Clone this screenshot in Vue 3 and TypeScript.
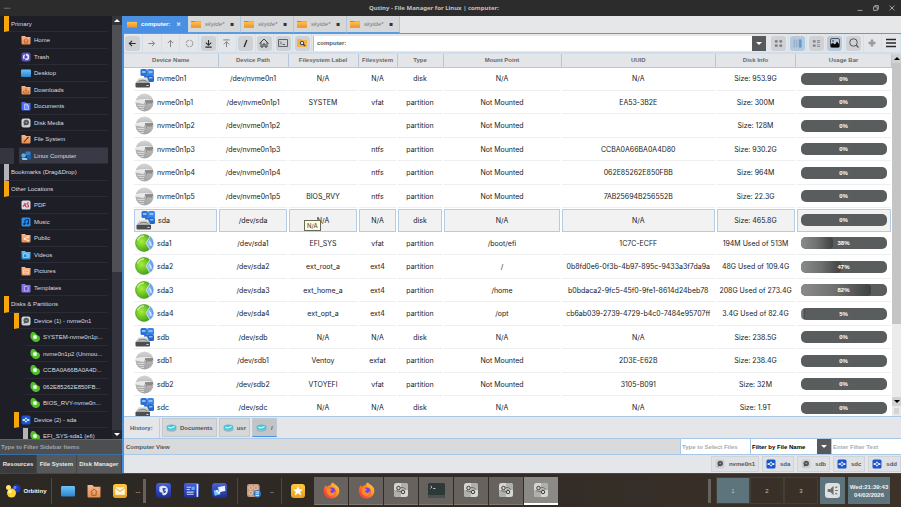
<script setup lang="ts">
import { ref } from 'vue'

interface SideItem {
  label: string
  level: 0 | 1 | 2 | 3
  icon?: string
  mark?: 'orange' | 'grey'
  selected?: boolean
}

interface Device {
  name: string
  kind: 'disk' | 'raw' | 'pie'
  label: string
  fs: string
  mount: string
  uuid: string
  info: string
  used: number
  selected?: boolean
}

const sideItems: SideItem[] = [
  { label: 'Primary', level: 0, mark: 'orange' },
  { label: 'Home', level: 1, icon: 'f-home' },
  { label: 'Trash', level: 1, icon: 'trash' },
  { label: 'Desktop', level: 1, icon: 'desktop' },
  { label: 'Downloads', level: 1, icon: 'f-down' },
  { label: 'Documents', level: 1, icon: 'f-doc' },
  { label: 'Disk Media', level: 1, icon: 'media' },
  { label: 'File System', level: 1, icon: 'f-root' },
  { label: 'Linux Computer', level: 1, icon: 'computer', selected: true },
  { label: 'Bookmarks (Drag&Drop)', level: 0, mark: 'grey' },
  { label: 'Other Locations', level: 0, mark: 'orange' },
  { label: 'PDF', level: 1, icon: 'pdf' },
  { label: 'Music', level: 1, icon: 'music' },
  { label: 'Public', level: 1, icon: 'f-share' },
  { label: 'Videos', level: 1, icon: 'f-video' },
  { label: 'Pictures', level: 1, icon: 'f-pic' },
  { label: 'Templates', level: 1, icon: 'f-tmpl' },
  { label: 'Disks & Partitions', level: 0, mark: 'orange' },
  { label: 'Device (1) - nvme0n1', level: 2, icon: 'media', mark: 'orange' },
  { label: 'SYSTEM-nvme0n1p...', level: 3, icon: 'part' },
  { label: 'nvme0n1p2 (Unmou...', level: 3, icon: 'part' },
  { label: 'CCBA0A66BA0A4D...', level: 3, icon: 'part' },
  { label: '062E85262E850FB...', level: 3, icon: 'part' },
  { label: 'BIOS_RVY-nvme0n...', level: 3, icon: 'part' },
  { label: 'Device (2) - sda', level: 2, icon: 'usb', mark: 'orange' },
  { label: 'EFI_SYS-sda1 (efi)', level: 3, icon: 'part', mark: 'grey' },
]

const NM = 'Not Mounted'
const NA = 'N/A'
const devices: Device[] = [
  { name: 'nvme0n1', kind: 'disk', label: NA, fs: NA, mount: NA, uuid: NA, info: 'Size: 953.9G', used: 0 },
  { name: 'nvme0n1p1', kind: 'raw', label: 'SYSTEM', fs: 'vfat', mount: NM, uuid: 'EA53-3B2E', info: 'Size: 300M', used: 0 },
  { name: 'nvme0n1p2', kind: 'raw', label: '', fs: '', mount: NM, uuid: '', info: 'Size: 128M', used: 0 },
  { name: 'nvme0n1p3', kind: 'raw', label: '', fs: 'ntfs', mount: NM, uuid: 'CCBA0A66BA0A4D80', info: 'Size: 930.2G', used: 0 },
  { name: 'nvme0n1p4', kind: 'raw', label: '', fs: 'ntfs', mount: NM, uuid: '062E85262E850FBB', info: 'Size: 964M', used: 0 },
  { name: 'nvme0n1p5', kind: 'raw', label: 'BIOS_RVY', fs: 'ntfs', mount: NM, uuid: '7AB25694B256552B', info: 'Size: 22.3G', used: 0 },
  { name: 'sda', kind: 'disk', label: NA, fs: NA, mount: NA, uuid: NA, info: 'Size: 465.8G', used: 0, selected: true },
  { name: 'sda1', kind: 'pie', label: 'EFI_SYS', fs: 'vfat', mount: '/boot/efi', uuid: '1C7C-ECFF', info: '194M Used of 513M', used: 38 },
  { name: 'sda2', kind: 'pie', label: 'ext_root_a', fs: 'ext4', mount: '/', uuid: '0b8fd0e6-0f3b-4b97-895c-9433a3f7da9a', info: '48G Used of 109.4G', used: 47 },
  { name: 'sda3', kind: 'pie', label: 'ext_home_a', fs: 'ext4', mount: '/home', uuid: 'b0bdaca2-9fc5-45f0-9fe1-8614d24beb78', info: '208G Used of 273.4G', used: 82 },
  { name: 'sda4', kind: 'pie', label: 'ext_opt_a', fs: 'ext4', mount: '/opt', uuid: 'cb6ab039-2739-4729-b4c0-7484e95707ff', info: '3.4G Used of 82.4G', used: 5 },
  { name: 'sdb', kind: 'disk', label: NA, fs: NA, mount: NA, uuid: NA, info: 'Size: 238.5G', used: 0 },
  { name: 'sdb1', kind: 'raw', label: 'Ventoy', fs: 'exfat', mount: NM, uuid: '2D3E-E62B', info: 'Size: 238.4G', used: 0 },
  { name: 'sdb2', kind: 'raw', label: 'VTOYEFI', fs: 'vfat', mount: NM, uuid: '3105-B091', info: 'Size: 32M', used: 0 },
  { name: 'sdc', kind: 'disk', label: NA, fs: NA, mount: NA, uuid: NA, info: 'Size: 1.9T', used: 0 },
]

const columns = ['Device Name', 'Device Path', 'Filesystem Label', 'Filesystem', 'Type', 'Mount Point', 'UUID', 'Disk Info', 'Usage Bar']
const otherTabs = ['skyide*', 'skyide*', 'skyide*', 'skyide*']
const navTools = [
  { icon: 't-back', on: true, name: 'Back' },
  { icon: 't-fwd', on: false, name: 'Forward' },
  { icon: 't-up', on: false, name: 'Up' },
  { icon: 't-reload', on: false, name: 'Reload' },
  { icon: 't-bottom', on: true, name: 'Bottom' },
  { icon: 't-top', on: false, name: 'Top' },
  { icon: 't-slash', on: true, name: 'Root' },
  { icon: 't-home', on: true, name: 'Home' },
  { icon: 't-term', on: true, name: 'Terminal' },
  { icon: 't-find', on: true, name: 'Find in folder' },
]
const viewTools = [
  { icon: 't-grid', on: true, name: 'Icons' },
  { icon: 't-cols', on: true, blue: true, name: 'Columns' },
  { icon: 't-list', on: true, name: 'List' },
  { icon: 't-image', on: true, blue: true, name: 'Thumbnails' },
  { icon: 't-search', on: true, name: 'Search' },
  { icon: 't-plus', on: false, name: 'Add' },
  { icon: 't-menu', on: false, name: 'Menu' },
]
const history = [
  { label: 'Documents', current: false },
  { label: 'usr', current: false },
  { label: '/', current: true },
]
const drives = [
  { label: 'nvme0n1', icon: 'media' },
  { label: 'sda', icon: 'usb' },
  { label: 'sdb', icon: 'media' },
  { label: 'sdc', icon: 'usb' },
  { label: 'sdd', icon: 'usb' },
]
const sideTabs = ['Resources', 'File System', 'Disk Manager']
const windows = ['firefox', 'firefox', 'gears', 'console', 'gears', 'gears', 'gears']

const path = ref('computer:')
const sideFilter = ref('')
const selectText = ref('')
const filterText = ref('')
const filterBy = ref('Filter by File Name')
</script>

<template>
  <div class="screen">
    <svg class="defs" aria-hidden="true">
      <defs>
        <linearGradient id="g-or" x1="0" y1="0" x2="0" y2="1"><stop offset="0" stop-color="#f7b98c" /><stop offset="1" stop-color="#e88d52" /></linearGradient>
        <linearGradient id="g-sky" x1="0" y1="0" x2="0" y2="1"><stop offset="0" stop-color="#6cc4f8" /><stop offset="1" stop-color="#2a84cf" /></linearGradient>
        <linearGradient id="g-navy" x1="0" y1="0" x2="0" y2="1"><stop offset="0" stop-color="#4a63d8" /><stop offset="1" stop-color="#1c2c92" /></linearGradient>
        <linearGradient id="g-silver" x1="0" y1="0" x2="0" y2="1"><stop offset="0" stop-color="#f4f4f4" /><stop offset="1" stop-color="#9a9a9a" /></linearGradient>
        <linearGradient id="g-yel" x1="0" y1="0" x2="0" y2="1"><stop offset="0" stop-color="#ffc93e" /><stop offset="1" stop-color="#e9a01c" /></linearGradient>
        <linearGradient id="g-fold" x1="0" y1="0" x2="0" y2="1"><stop offset="0" stop-color="#ffc050" /><stop offset="1" stop-color="#f0912a" /></linearGradient>
        <radialGradient id="g-green" cx=".35" cy=".4" r=".7"><stop offset="0" stop-color="#a8f03c" /><stop offset="1" stop-color="#3a9c10" /></radialGradient>
        <radialGradient id="g-blue" cx=".4" cy=".5" r=".7"><stop offset="0" stop-color="#a9d2ff" /><stop offset="1" stop-color="#3478cf" /></radialGradient>
        <linearGradient id="g-ball" x1="0" y1="0" x2="0" y2="1"><stop offset="0" stop-color="#d6d6d6" /><stop offset=".45" stop-color="#b9b9b9" /><stop offset="1" stop-color="#a2a2a2" /></linearGradient>
        <linearGradient id="g-fire" x1="1" y1="0" x2="0" y2="1"><stop offset="0" stop-color="#ffe14a" /><stop offset=".45" stop-color="#ff8a1e" /><stop offset="1" stop-color="#f0244f" /></linearGradient>
        <path id="fold" d="M1 2h7l2 2h9v13a2 2 0 0 1-2 2H3a2 2 0 0 1-2-2z" />
      </defs>
      <symbol id="f-home" viewBox="0 0 20 20"><use href="#fold" fill="url(#g-or)" /><path d="M5 11l5-4 5 4M7 10v6h6v-6M10 12v3" fill="none" stroke="#c4602a" stroke-width="1.6" /></symbol>
      <symbol id="f-down" viewBox="0 0 20 20"><use href="#fold" fill="url(#g-or)" /><path d="M10 6v6M7 10l3 3 3-3M5 12v4h10v-4" fill="none" stroke="#b8602c" stroke-width="1.6" /></symbol>
      <symbol id="f-doc" viewBox="0 0 20 20"><use href="#fold" fill="#4d6cf5" /><path d="M7 6h5l3 3v8H7zM12 6v4h3" fill="#6f8bff" stroke="#d4dcff" stroke-width="1.3" /></symbol>
      <symbol id="f-root" viewBox="0 0 20 20"><use href="#fold" fill="url(#g-or)" /><path d="M6 16l8-9M13 6l2 2" stroke="#5b2b14" stroke-width="2.2" /></symbol>
      <symbol id="f-share" viewBox="0 0 20 20"><use href="#fold" fill="url(#g-or)" /><path d="M14 8l-7 3.500 7 3.500" fill="none" stroke="#fff" stroke-width="1.400" /><circle cx="7" cy="11.500" r="1.700" fill="#fff" /><circle cx="14" cy="8" r="1.700" fill="#fff" /><circle cx="14" cy="15" r="1.700" fill="#fff" /></symbol>
      <symbol id="f-video" viewBox="0 0 20 20"><use href="#fold" fill="url(#g-sky)" /><path d="M5 8h7v7H5zM12 11l4-2v6l-4-2" fill="#2d83c4" stroke="#d7f0ff" stroke-width="1.200" /></symbol>
      <symbol id="f-pic" viewBox="0 0 20 20"><use href="#fold" fill="url(#g-or)" /><path d="M5 8h10v8H5zM6 14l3-3 3 3 2-2" fill="none" stroke="#ffe3cf" stroke-width="1.400" /></symbol>
      <symbol id="f-tmpl" viewBox="0 0 20 20"><use href="#fold" fill="#8473e6" /><path d="M7 7h5l2 2v7H7z" fill="#6955c9" stroke="#d8d1ff" stroke-width="1.300" /></symbol>
      <symbol id="trash" viewBox="0 0 20 20"><rect x="1" y="1" width="18" height="18" rx="4" fill="#5753b8" /><circle cx="10" cy="10" r="4.800" fill="none" stroke="#ece9ff" stroke-width="3.200" stroke-dasharray="8 2" /></symbol>
      <symbol id="desktop" viewBox="0 0 20 20"><rect x="0" y="3" width="20" height="15" rx="2" fill="url(#g-sky)" /></symbol>
      <symbol id="media" viewBox="0 0 20 20"><rect x="1" y="1" width="18" height="18" rx="4" fill="#cfd0d2" /><circle cx="10.500" cy="9" r="5.500" fill="#55585c" /><circle cx="10.500" cy="9" r="1.500" fill="#aaa" /><path d="M6 15l3-4" stroke="#3a3c40" stroke-width="2" /></symbol>
      <symbol id="computer" viewBox="0 0 20 20"><rect x="9" y="1" width="10" height="8" rx="1" fill="#2f7fd0" /><rect x="12" y="9" width="8" height="8" rx="1" fill="#1e5fa8" /><circle cx="5" cy="9" r="4.500" fill="#55aee8" /><path d="M1 14h10l2 4H3z" fill="#8fcbee" /></symbol>
      <symbol id="pdf" viewBox="0 0 20 20"><rect x="1" y="1" width="18" height="18" rx="3" fill="#d7dbe6" /><path d="M4 14l4-8 1 8M5 11h5M16 6h-4v4h3v4h-5" fill="none" stroke="#d8304a" stroke-width="1.800" /></symbol>
      <symbol id="music" viewBox="0 0 20 20"><rect x="1" y="1" width="18" height="18" rx="3" fill="#2b8de8" /><path d="M8 14V6l7-1v8" fill="none" stroke="#0c2d5c" stroke-width="2" /><circle cx="6.500" cy="14" r="2.200" fill="#0c2d5c" /><circle cx="13.500" cy="13" r="2.200" fill="#0c2d5c" /></symbol>
      <symbol id="part" viewBox="0 0 20 20"><path d="M3 1c4-2 8 0 9 3l3 3c3-1 5 2 5 6s-4 7-8 7-7-2-8-5C0 13 0 4 3 1z" fill="#4fbf2c" /><circle cx="10" cy="10" r="4.500" fill="#b5ee98" /><circle cx="10" cy="10" r="3" fill="#fff" /></symbol>
      <symbol id="usb" viewBox="0 0 20 20"><rect x="1" y="1" width="18" height="18" rx="3" fill="#1a55cc" /><path d="M4 10h12M10 5v10" stroke="#fff" stroke-width="1.600" /><circle cx="10" cy="10" r="3" fill="#1a55cc" stroke="#fff" stroke-width="1.600" /><circle cx="4.500" cy="10" r="1.700" fill="#fff" /><circle cx="15.500" cy="10" r="1.700" fill="#fff" /></symbol>
      <symbol id="d-disk" viewBox="0 0 38 38"><rect x="11" y="0" width="13" height="14" rx="3" fill="#2a72d8" /><rect x="24" y="0" width="14" height="14" rx="3" fill="#3b86e6" /><rect x="18" y="13" width="20" height="13" rx="3" fill="#2468c8" /><path d="M14 4h7v4h-7zM27 4h8v4h-8zM28 16h7v3h-7z" fill="#8dbdf8" /><path d="M8 17h16l6 12H1z" fill="url(#g-silver)" /><path d="M1 28h29v7a2 2 0 0 1-2 2H3a2 2 0 0 1-2-2z" fill="#4c4f52" /><path d="M8 25a8 4 0 0 1 15 0" fill="none" stroke="#777" stroke-width="2" /><path d="M23 33h4" stroke="#cde" stroke-width="2" /></symbol>
      <symbol id="d-raw" viewBox="0 0 38 38"><circle cx="19" cy="19" r="18" fill="url(#g-ball)" /><path d="M2 14c9-3 25-3 34 0l-1 3H20l-3 5-15-3z" fill="#e9e9e9" /><path d="M20 16h16" stroke="#5c5c5c" stroke-width="2.500" /><path d="M22 17h13l-1 4H24l-2 6z" fill="#8b8b8b" /><path d="M5 25h14M7 29h11M11 33h7" stroke="#d6d6d6" stroke-width="2" /></symbol>
      <symbol id="d-pie" viewBox="0 0 38 38"><ellipse cx="18" cy="18" rx="17" ry="17" fill="url(#g-green)" stroke="#2d7c12" /><path d="M22 18L31 4q6 6 7 14-1 9-8 14z" fill="url(#g-blue)" stroke="#e9f4ff" stroke-width="1.500" /><path d="M5 13q4-9 13-9" fill="none" stroke="#e2ffbd" stroke-width="3" opacity=".7" /><path d="M29 15q4 3 3 9" fill="none" stroke="#fff" stroke-width="2" /></symbol>
      <symbol id="folder" viewBox="0 0 20 14"><path d="M0 1h8l1 1h11v12H0z" fill="#d98118" /><path d="M0 3h20v11H0z" fill="url(#g-fold)" /></symbol>
      <symbol id="t-back" viewBox="0 0 20 20"><path d="M17 10H4M9 4l-6 6 6 6" fill="none" stroke="currentColor" stroke-width="2.600" /></symbol>
      <symbol id="t-fwd" viewBox="0 0 20 20"><path d="M3 10h13M11 4l6 6-6 6" fill="none" stroke="#777" stroke-width="2" /></symbol>
      <symbol id="t-up" viewBox="0 0 20 20"><path d="M10 18V4M4 9l6-6 6 6" fill="none" stroke="#777" stroke-width="2" /></symbol>
      <symbol id="t-reload" viewBox="0 0 20 20"><circle cx="10" cy="10" r="7.500" fill="none" stroke="#8a8d90" stroke-width="1.800" stroke-dasharray="10 2" /></symbol>
      <symbol id="t-bottom" viewBox="0 0 20 20"><path d="M10 2v12M4 8l6 6 6-6M3 18h14" fill="none" stroke="currentColor" stroke-width="2.400" /></symbol>
      <symbol id="t-top" viewBox="0 0 20 20"><path d="M10 18V6M4 12l6-6 6 6M3 2h14" fill="none" stroke="#777" stroke-width="2" /></symbol>
      <symbol id="t-slash" viewBox="0 0 20 20"><path d="M7 18l6-16" stroke="currentColor" stroke-width="3" /></symbol>
      <symbol id="t-home" viewBox="0 0 20 20"><path d="M1 11l9-9 9 9M4 9v9h4v-6h4v6h4V9" fill="none" stroke="currentColor" stroke-width="1.800" /></symbol>
      <symbol id="t-term" viewBox="0 0 20 20"><path d="M1 3h18v14H1zM4 7l3 3-3 3M9 13h5" fill="none" stroke="#55585c" stroke-width="1.800" /></symbol>
      <symbol id="t-find" viewBox="0 0 20 20"><path d="M0 2h8l2 2h10v14H0z" fill="#f2b43c" /><circle cx="10" cy="10" r="3.500" fill="#dbe6ff" stroke="#2b3c8c" stroke-width="2" /><path d="M12 12l4 4" stroke="#2b3c8c" stroke-width="2.600" /></symbol>
      <symbol id="t-grid" viewBox="0 0 20 20"><path d="M2 3h6v5H2zM12 3h6v5h-6zM2 12h6v5H2zM12 12h6v5h-6z" fill="#77797b" /></symbol>
      <symbol id="t-cols" viewBox="0 0 20 20"><path d="M1 1h4v18H1zM7 1h3v18H7z" fill="#8fb4d6" /><path d="M13 1h6v18h-6z" fill="#5f9bd2" /></symbol>
      <symbol id="t-list" viewBox="0 0 20 20"><path d="M2 3h6v5H2zM2 12h6v5H2zM11 3h7v2h-7zM11 7h7v2h-7zM11 12h7v2h-7zM11 16h7v2h-7z" fill="#808284" /></symbol>
      <symbol id="t-image" viewBox="0 0 20 20"><rect x="1" y="1" width="18" height="18" rx="3" fill="none" stroke="#222" stroke-width="1.400" /><path d="M2 18v-6l4-2 4 3 4-6 4 5v6z" fill="#050505" /><circle cx="6" cy="6" r="1.500" fill="#111" /></symbol>
      <symbol id="t-search" viewBox="0 0 20 20"><circle cx="9" cy="9" r="7.500" fill="none" stroke="#55585b" stroke-width="2" /><path d="M14 14l5 5" stroke="#55585b" stroke-width="2.400" /></symbol>
      <symbol id="t-plus" viewBox="0 0 20 20"><path d="M10 3v14M3 10h14" stroke="#999c9f" stroke-width="5" /></symbol>
      <symbol id="t-menu" viewBox="0 0 20 20"><path d="M0 3h20M0 10h20M0 17h20" stroke="#26282a" stroke-width="3" /></symbol>
      <symbol id="h-disk" viewBox="0 0 22 16"><ellipse cx="11" cy="10" rx="10" ry="5.500" fill="#8fb9c4" /><ellipse cx="11" cy="6" rx="10" ry="5" fill="#46c4d8" /><path d="M5 6q4 4 12-1" fill="none" stroke="#e6fbff" stroke-width="2.500" /></symbol>
      <symbol id="a-orbit" viewBox="0 0 32 28"><circle cx="7" cy="7" r="5" fill="#ffe777" /><circle cx="23" cy="9" r="8" fill="#1d38c8" /><circle cx="20" cy="7" r="3" fill="#6a85ff" /><circle cx="13" cy="18" r="9" fill="#ffd42e" /><circle cx="10" cy="15" r="3.500" fill="#fff7c0" /></symbol>
      <symbol id="a-home" viewBox="0 0 26 26"><path d="M1 2h9l3 3h12v18a2 2 0 0 1-2 2H3a2 2 0 0 1-2-2z" fill="url(#g-or)" /><path d="M7 15l6-6 6 6M9 14v7h8v-7" fill="none" stroke="#9c532c" stroke-width="1.600" /></symbol>
      <symbol id="a-mail" viewBox="0 0 26 26"><rect width="26" height="26" rx="5" fill="url(#g-yel)" /><rect x="4" y="6" width="18" height="14" rx="1" fill="#fff4d6" /><path d="M4 7l9 7 9-7" fill="none" stroke="#d79a28" stroke-width="1.600" /></symbol>
      <symbol id="a-eagle" viewBox="0 0 28 28"><rect width="28" height="28" rx="6" fill="url(#g-navy)" /><path d="M6 8c4-4 14-4 16 3 1 6-2 11-7 12-3 0-4-3-3-5-4 0-6-2-6-4 0-3 1-4 0-6z" fill="#dfe6f5" /><path d="M12 10q5-2 7 1-3 0-4 3 3 0 4 2-2 3-5 3 1-3-1-4z" fill="#32459f" /></symbol>
      <symbol id="a-writer" viewBox="0 0 28 28"><rect width="28" height="28" rx="4" fill="url(#g-navy)" /><path d="M25 2v24" stroke="#dfe6ff" stroke-width="3" /><path d="M5 8h8M5 12h6M5 17h13M5 21h13" stroke="#c5d7ff" stroke-width="2" /><path d="M14 7h6v6h-6z" fill="#58b3f5" /></symbol>
      <symbol id="a-share" viewBox="0 0 28 28"><rect width="28" height="28" rx="6" fill="url(#g-navy)" /><path d="M11 8l13-3 1 10-11 2z" fill="#e8f1ff" /><path d="M3 14l10-2 3 9-11 3z" fill="#78c2f8" /><path d="M8 14l5 5 6-8" fill="none" stroke="#fff" stroke-width="2" /></symbol>
      <symbol id="a-db" viewBox="0 0 30 30"><rect width="27" height="28" rx="5" fill="#c4997f" /><g fill="none" stroke="#e6c7b2" stroke-width="2"><circle cx="8" cy="8" r="4" /><circle cx="19" cy="8" r="4" /><circle cx="8" cy="19" r="4" /></g><circle cx="22" cy="21" r="8" fill="#2476c4" /><path d="M18 17h8M18 21h8M18 25h8" stroke="#cbe6ff" stroke-width="2.400" /></symbol>
      <symbol id="a-star" viewBox="0 0 28 28"><rect width="28" height="28" rx="6" fill="url(#g-yel)" /><path d="M14 4l3 7h7l-5.500 4.500 2 7.500-6.500-4.500L7.500 23l2-7.500L4 11h7z" fill="#fff" /></symbol>
      <symbol id="firefox" viewBox="0 0 34 34"><path d="M20 1c2 4 8 5 11 10 5 11-2 22-14 22S0 24 2 13c1-3 2-5 4-7l1 4c3-3 5-3 8-3 0-2 2-5 5-6z" fill="url(#g-fire)" /><circle cx="17" cy="19" r="8" fill="#7a3fe0" /><path d="M8 13c4-2 8 0 10 3-4 0-4 3-2 5 3 2 7 0 7-4 3 6-1 11-7 11S6 20 8 13z" fill="#ff8a24" /></symbol>
      <symbol id="gears" viewBox="0 0 28 28"><rect width="28" height="28" rx="5" fill="#d6d6d3" /><path d="M14 0h9a5 5 0 0 1 5 5v9H14zM0 14h14v14H5a5 5 0 0 1-5-5z" fill="#b0b0ac" /><circle cx="9" cy="10" r="3.500" fill="none" stroke="#3a3a38" stroke-width="2" /><circle cx="18" cy="18" r="3.500" fill="none" stroke="#3a3a38" stroke-width="2" /><path d="M4 15q6 4 10 2M13 9q6-2 11 4" fill="none" stroke="#666" stroke-width="1.600" /></symbol>
      <symbol id="console" viewBox="0 0 34 30"><rect width="34" height="30" rx="3" fill="#2d3838" /><path d="M0 24h34v3a3 3 0 0 1-3 3H3a3 3 0 0 1-3-3z" fill="#465252" /><path d="M5 6l3 2-3 3M10 11h5" fill="none" stroke="#cdd" stroke-width="1.600" /></symbol>
      <symbol id="sound" viewBox="0 0 28 28"><rect width="28" height="28" rx="6" fill="#dfe1e0" /><path d="M5 11h5l6-6v18l-6-6H5z" fill="#6c716f" /><path d="M19 9l4-2M19 14h5M19 19l4 2" stroke="#6c716f" stroke-width="2" /></symbol>
    </svg>

    <header class="titlebar">
      <span class="dots">•••</span>
      <h1>Qutiny - File Manager for Linux | computer:</h1>
      <div class="winbtns">
        <button aria-label="Minimize"><svg viewBox="0 0 10 10"><path d="M1 9h8" /></svg></button>
        <button aria-label="Restore"><svg viewBox="0 0 10 10"><path d="M1 3h6v6H1zM3 3V1h6v6H7" /></svg></button>
        <button aria-label="Close"><svg viewBox="0 0 10 10"><path d="M1 1l8 8M9 1L1 9" /></svg></button>
      </div>
    </header>

    <div class="body">
      <aside class="sidebar">
        <div class="tree">
          <ul>
            <li v-for="(s, i) in sideItems" :key="i" :class="['l' + s.level, s.mark, { sel: s.selected }]">
              <span class="pre"></span>
              <span class="row">
                <svg v-if="s.icon"><use :href="'#' + s.icon" /></svg>
                <span>{{ s.label }}</span>
              </span>
            </li>
          </ul>
          <div class="sbar dark"><i class="up"></i><b></b><i class="down"></i></div>
        </div>
        <input v-model="sideFilter" class="sfilter" placeholder="Type to Filter Sidebar Items" aria-label="Filter sidebar items" />
        <nav class="stabs">
          <button v-for="(t, i) in sideTabs" :key="t" :class="{ on: i === 0 }">{{ t }}</button>
        </nav>
      </aside>

      <main class="content">
        <nav class="tabs">
          <button class="tab active"><svg><use href="#folder" /></svg><span>computer:</span><em>×</em></button>
          <button v-for="(t, i) in otherTabs" :key="i" class="tab"><svg><use href="#folder" /></svg><span>{{ t }}</span><em>▪</em></button>
        </nav>

        <div class="toolbar">
          <div class="group nav">
            <button v-for="t in navTools" :key="t.icon" :aria-label="t.name"><span :class="{ on: t.on }"><svg><use :href="'#' + t.icon" /></svg></span></button>
          </div>
          <input v-model="path" class="path" aria-label="Location" />
          <button class="drop" aria-label="Recent locations"></button>
          <div class="group view">
            <button v-for="t in viewTools" :key="t.icon" :aria-label="t.name"><span :class="{ on: t.on, blue: t.blue }"><svg><use :href="'#' + t.icon" /></svg></span></button>
          </div>
        </div>

        <div class="listing">
          <div class="tablewrap">
            <table>
              <colgroup>
                <col class="c1" /><col class="c2" /><col class="c2" /><col class="c4" /><col class="c5" />
                <col class="c6" /><col /><col class="c8" /><col class="c9" />
              </colgroup>
              <thead>
                <tr><th v-for="c in columns" :key="c">{{ c }}</th></tr>
              </thead>
              <tbody>
                <tr v-for="d in devices" :key="d.name" :class="{ sel: d.selected }">
                  <td><div class="cell name"><svg><use :href="'#d-' + d.kind" /></svg>{{ d.name }}</div></td>
                  <td><div class="cell">/dev/{{ d.name }}</div></td>
                  <td><div class="cell">{{ d.label }}<span v-if="d.selected" class="tip">{{ d.label }}</span></div></td>
                  <td><div class="cell">{{ d.fs }}</div></td>
                  <td><div class="cell">{{ d.kind === 'disk' ? 'disk' : 'partition' }}</div></td>
                  <td><div class="cell">{{ d.mount }}</div></td>
                  <td><div class="cell">{{ d.uuid }}</div></td>
                  <td><div class="cell">{{ d.info }}</div></td>
                  <td><div class="cell"><div class="bar"><div class="fill" :style="{ width: d.used + '%' }"></div><span>{{ d.used }}%</span></div></div></td>
                </tr>
              </tbody>
            </table>
          </div>
          <div class="sbar light"><i class="up"></i><b></b><i class="down"></i><u></u></div>
        </div>

        <div class="history">
          <span class="hl">History:</span>
          <button v-for="h in history" :key="h.label" :class="{ cur: h.current }"><svg><use href="#h-disk" /></svg>{{ h.label }}</button>
        </div>

        <div class="filters">
          <span class="state">Computer View</span>
          <input v-model="selectText" placeholder="Type to Select Files" aria-label="Select files" />
          <label class="combo">
            <select v-model="filterBy" aria-label="Filter mode"><option>Filter by File Name</option></select>
            <span class="drop"></span>
          </label>
          <input v-model="filterText" placeholder="Enter Filter Text" aria-label="Filter text" />
        </div>

        <div class="drives">
          <button v-for="d in drives" :key="d.label"><svg><use :href="'#' + d.icon" /></svg>{{ d.label }}</button>
        </div>
      </main>
    </div>

    <footer class="taskbar">
      <button class="start"><svg><use href="#a-orbit" /></svg>Orbitiny</button>
      <i class="sep"></i>
      <div class="launch">
        <button aria-label="Desktop"><svg><use href="#desktop" /></svg></button>
        <button aria-label="Home"><svg><use href="#a-home" /></svg></button>
        <button aria-label="Mail"><svg><use href="#a-mail" /></svg></button>
      </div>
      <span class="more">...</span>
      <i class="grip"></i>
      <div class="launch wide">
        <button aria-label="Eagle"><svg><use href="#a-eagle" /></svg></button>
        <button aria-label="Writer"><svg><use href="#a-writer" /></svg></button>
        <button aria-label="Share"><svg><use href="#a-share" /></svg></button>
      </div>
      <i class="sep"></i>
      <div class="launch"><button aria-label="Database"><svg><use href="#a-db" /></svg></button></div>
      <span class="more">..</span>
      <i class="sep"></i>
      <div class="launch"><button aria-label="Favourites"><svg><use href="#a-star" /></svg></button></div>
      <div class="wins">
        <button v-for="(w, i) in windows" :key="i" :class="[w, { on: i === windows.length - 1 }]" :aria-label="w"><svg><use :href="'#' + w" /></svg></button>
      </div>
      <i class="grip right"></i>
      <div class="desks">
        <button class="on">1</button><button>2</button><button>3</button>
      </div>
      <button class="snd" aria-label="Volume"><svg><use href="#sound" /></svg></button>
      <time class="clock"><span>Wed:21:39:43</span><span>04/02/2026</span></time>
    </footer>
  </div>
</template>

<style>
body { margin: 0; background: #2d2823; }
</style>

<style scoped>
.screen { display: flex; flex-direction: column; height: 100vh; overflow: hidden; font: bold 6px/8px "Liberation Sans", Arial, sans-serif; color: #55585c; }
.screen * { box-sizing: border-box; }
.defs { position: absolute; width: 0; height: 0; }
button, input, select { font: inherit; color: inherit; margin: 0; padding: 0; border: 0; border-radius: 0; background: none; outline: none; }
button { display: flex; align-items: center; justify-content: center; }
h1 { margin: 0; font: inherit; }
ul { margin: 0; padding: 0; list-style: none; }

.titlebar { display: grid; grid-template-columns: 1fr auto 1fr; align-items: center; height: 16px; flex: none; padding: 0 5px 0 4px; background: #2c2c2c; color: #c4c4c4; }
.titlebar h1 { font: bold 6px/8px "Noto Sans", sans-serif; padding-right: 32px; }
.dots { color: #707070; }
.winbtns { display: flex; justify-content: flex-end; gap: 8px; }
.winbtns button { width: 8px; height: 8px; }
.winbtns svg { width: 6px; height: 6px; fill: none; stroke: #b4b4b4; stroke-width: 1.400; }

.body { display: flex; flex: 1; min-height: 0; }

.sidebar { display: flex; flex-direction: column; width: 124px; flex: none; background: #1d1e26; border-right: 2px solid #4a90dc; }
.tree { display: flex; flex: 1; min-height: 0; overflow: hidden; }
.tree ul { flex: 1; min-width: 0; padding-right: 4px; font-weight: normal; color: #dcdde2; }
.tree li { display: flex; height: 16px; }
.tree li:nth-child(even) { height: 17px; }
.pre { width: 4px; flex: none; }
.row { display: flex; flex: 1; align-items: center; gap: 3px; min-width: 0; padding-left: 2px; border-bottom: 1px solid #2a2b35; white-space: nowrap; overflow: hidden; }
.row svg { width: 10px; height: 10px; flex: none; }
.l0 .row { border-left: 5px solid transparent; }
.l1 .pre { width: 19px; }
.l2 .pre { width: 14px; }
.l2 .row { border-left: 5px solid transparent; }
.l3 .pre { width: 23px; }
.l3 .row { border-left: 5px solid transparent; }
.tree .orange .row { border-left-color: #f6a60a; }
.tree .grey .row { border-left-color: #b4b4b8; }
.sel .pre { border-right: 5px solid #1d1e26; background: #34353f; }
.sel .row { background: #393a45; }

.sbar { display: flex; flex-direction: column; flex: none; }
.sbar i { display: flex; align-items: center; justify-content: center; height: 9px; flex: none; }
.sbar i::before { content: ""; border: 3px solid transparent; }
.sbar .up::before { border-bottom-color: currentColor; border-top: 0; }
.sbar .down::before { border-top-color: currentColor; border-bottom: 0; }
.sbar b { flex: 1; }
.dark { width: 10px; color: #fff; }
.dark b { background: linear-gradient(#4f5054 61%, #33343c 61%); }
.dark .up { background: #33343c; }
.dark .down { background: #24252d; }
.sfilter { height: 16px; flex: none; padding: 0 1px; background: #4c4e50; border-top: 1px solid #3c6ea6; border-bottom: 1px solid #3c6ea6; }
.sfilter::placeholder { color: #a2a4a6; opacity: 1; }
.stabs { display: flex; height: 18px; flex: none; background: #505254; color: #e8e8e8; }
.stabs button { flex: 1 1 auto; background: #56585a; border-right: 1px solid #444648; }
.stabs .on { background: #3b3c3e; }

.content { display: flex; flex: 1; flex-direction: column; min-width: 0; background: #e4e6e9; }
.tabs { display: flex; height: 18px; flex: none; background: #e6e7e9; border-bottom: 1px solid #5b9be0; }
.tab { justify-content: flex-start; gap: 4px; width: 53px; padding: 0 6px 0 3px; background: #d6d7d9; border-right: 1px solid #b6c6d6; border-bottom: 1px solid #5b9be0; font-weight: normal; font-style: italic; color: #77797c; }
.tab svg { width: 10px; height: 8px; flex: none; }
.tab em { margin-left: auto; color: #333; font: bold 6px/8px "DejaVu Sans", sans-serif; }
.tab.active { width: 64px; background: #4a90e2; border-color: #4a90e2; color: #fff; font-weight: bold; font-style: normal; }
.active em { color: #fff; }

.toolbar { display: flex; align-items: center; height: 20px; flex: none; border-bottom: 2px solid #cfdeea; }
.group { display: grid; grid-auto-flow: column; grid-auto-columns: 1fr; align-self: stretch; }
.nav { width: 188px; }
.view { width: 131px; margin-left: 4px; }
.group button { border-right: 1px solid #cfe0ee; }
.group button > span { display: flex; align-items: center; justify-content: center; width: 15px; height: 15px; border-radius: 3px; color: #2b2d30; }
.group .on { background: #cfd1d4; }
.group .blue { background: #b9c8d8; }
.group svg { width: 9px; height: 9px; }
.nav button:nth-child(n + 8) svg, .view button:nth-child(n + 4) svg { width: 10px; height: 10px; }
.path { flex: 1; min-width: 0; height: 15px; margin-left: 1px; padding: 0 3px; background: #fff; border-left: 1px solid #9fc3e6; }
.drop { display: flex; align-items: center; justify-content: center; width: 14px; height: 15px; flex: none; background: #57595b; }
.drop::before { content: ""; border: 3px solid transparent; border-top-color: #fff; border-bottom: 0; }

.listing { display: flex; flex: 1; min-height: 0; overflow: hidden; background: #fff; }
.tablewrap { flex: 1; min-width: 0; overflow: hidden; }
table { width: 100%; table-layout: fixed; border-collapse: collapse; font: 7px/9px Inter, "Liberation Sans", sans-serif; color: #17191b; text-align: center; }
.c1 { width: 94px; }
.c2 { width: 70px; }
.c4 { width: 39px; }
.c5 { width: 46px; }
.c6 { width: 118px; }
.c8 { width: 80px; }
.c9 { width: 96px; }
th, td { padding: 0; }
th { height: 13px; font: bold 6px/8px "Liberation Sans", Arial, sans-serif; color: #66696d; background: #e4e5e8; border-right: 1px solid #b3c8dd; border-bottom: 1px solid #b3c8dd; white-space: nowrap; }
tbody tr { height: 23px; }
tbody tr:nth-child(even) { height: 24px; }
.cell { position: relative; display: flex; align-items: center; justify-content: center; height: 23px; margin: 0 1px; border-bottom: 1px solid #eeeff0; white-space: nowrap; }
.name { justify-content: flex-start; gap: 3px; margin-left: 10px; padding-left: 1px; }
.name svg { width: 19px; height: 19px; }
tr.sel .cell { border: 1px solid #b4cce6; background: #f2f2f3; }
.tip { position: absolute; top: 10px; left: 14px; padding: 0 2px; border: 1px solid #6a6a5c; background: #ffffdc; font-size: 6px; line-height: 9px; color: #333; }
.bar { position: relative; display: flex; align-items: center; justify-content: center; width: 86px; height: 12px; border-radius: 5px; overflow: hidden; background: #5a5d5e; color: #fff; font: bold 6px/8px "Liberation Sans", Arial, sans-serif; }
.fill { position: absolute; inset: 0 auto 0 0; border-radius: 4px; background: linear-gradient(90deg, #8a8c8c, #6e7070 50%, #3f4142); }
.bar span { position: relative; }
.light { width: 9px; color: #000; background: #e8e8e9; }
.light .up, .light .down { background: #d0d1d2; }
.light b { background: linear-gradient(#c5c5c6 78%, #ebebec 78%); }
.light u { width: 5px; height: 6px; margin: 2px; background: #d4d4d5; }

.history { display: flex; align-items: center; gap: 2px; height: 23px; flex: none; padding-left: 2px; border-top: 1px solid #a9c8e6; border-bottom: 1px solid #a9c8e6; }
.hl { width: 34px; padding: 6px 4px; border-right: 1px solid #b9cfe4; }
.history button { gap: 3px; height: 19px; padding: 0 3px; background: #d6d7d9; border: 1px solid #c2c9d0; color: #505356; }
.history svg { width: 11px; height: 8px; }
.history .cur { background: #c2c4c8; border-bottom: 1px solid #4a90e2; gap: 4px; }

.filters { display: flex; align-items: center; height: 16px; flex: none; background: #d9dadb; border-bottom: 1px solid #a9c8e6; }
.state { flex: 1; padding-left: 2px; }
.filters input { width: 70px; height: 15px; padding: 0 1px; background: #fff; border-left: 1px solid #a9c8e6; }
.filters input::placeholder { color: #a9abad; opacity: 1; }
.combo { display: flex; }
.combo select { appearance: none; width: 67px; height: 15px; padding: 0 1px; background: #fff; color: #000; border-left: 1px solid #a9c8e6; }

.drives { display: flex; align-items: center; justify-content: flex-end; gap: 3px; height: 18px; flex: none; }
.drives button { gap: 4px; height: 16px; padding: 0 3px; background: #dfe1e4; border: 1px solid #d0d3d7; }
.drives svg { width: 10px; height: 10px; }

.taskbar { display: flex; align-items: center; height: 34px; flex: none; padding: 0 11px 0 5px; border-top: 1px solid #4a4540; background: linear-gradient(90deg, #2b2723, #332c26 60%, #3c322a); color: #f2f2f2; }
.start { gap: 2px; width: 42px; }
.start svg { width: 16px; height: 14px; }
.sep { width: 1px; height: 26px; margin: 0 3px 0 4px; background: #4d4843; }
.grip { width: 3px; height: 24px; margin-right: 3px; background: #67625c; }
.launch { display: flex; }
.launch button { width: 26px; height: 26px; }
.launch svg { width: 14px; height: 14px; }
.launch.wide button { width: 28px; }
.launch.wide svg { width: 15px; height: 15px; }
.more { width: 10px; text-align: center; color: #bbb; }
.wins { display: flex; gap: 1px; margin-left: 3px; }
.wins button { width: 34px; height: 28px; background: #67625d; border-bottom: 1px solid #7f7a74; }
.wins svg { width: 17px; height: 17px; }
.wins .gears svg { width: 14px; height: 14px; }
.wins .on { background: #8c8a87; border-bottom: 2px solid #fff; }
.grip.right { margin: 0 5px 0 auto; }
.desks { display: flex; }
.desks button { width: 34px; height: 27px; border: 1px solid #453d36; color: #c2c0be; font-weight: normal; }
.desks .on { background: #5d747c; }
.snd { width: 25px; height: 27px; margin: 0 3px 0 2px; background: #5d747c; }
.snd svg { width: 15px; height: 15px; }
.clock { display: flex; flex-direction: column; align-items: center; justify-content: center; width: 42px; height: 27px; background: #5d747c; }
</style>
